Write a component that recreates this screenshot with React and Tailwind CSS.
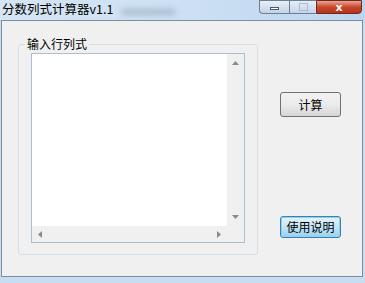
import React from "react";

const cjk = { fontFamily: '"Noto Sans CJK SC", "Noto Sans", sans-serif' };

function Arrow({ dir }) {
  const pts = {
    up: "0,4 3.5,0 7,4",
    down: "0,0 3.5,4 7,0",
    left: "4,0 0,3.5 4,7",
    right: "0,0 4,3.5 0,7",
  }[dir];
  const vert = dir === "up" || dir === "down";
  return (
    <svg width={vert ? 7 : 4} height={vert ? 4 : 7} viewBox={vert ? "0 0 7 4" : "0 0 4 7"}>
      <polygon points={pts} fill="#8a8a8a" />
    </svg>
  );
}

export default function App() {
  return (
    <div className="w-[365px] h-[283px] relative overflow-hidden bg-[#c9ddf1]" style={cjk}>
      {/* title bar */}
      <div className="h-[20px] flex items-start bg-gradient-to-r from-[#d6e5f4] via-[#cde0f3] to-[#bcd5ef]">
        <div className="pl-[2px] pt-[1px] text-[12.5px] leading-[16px] text-black">分数列式计算器v1.1</div>
        <div className="ml-[8px] mt-[9px] w-[55px] h-[6px] rounded-full bg-[#7f95ad] blur-[3px] opacity-50" />
        <div className="ml-auto mr-[3px] flex h-[14px]">
          <div className="w-[30px] h-[14px] border border-[#6d7f95] border-r-0 rounded-bl-[4px] bg-gradient-to-b from-[#e8f0f9] to-[#c2d3e6] flex items-center justify-center">
            <div className="w-[9px] h-[3px] bg-white border border-[#4a5a6e] mt-[3px]" />
          </div>
          <div className="w-[27px] h-[14px] border border-[#6d7f95] border-r-0 bg-gradient-to-b from-[#e6eef8] to-[#c5d5e7] flex items-center justify-center">
            <div className="w-[9px] h-[8px] border border-[#9aa8b8] opacity-70" />
          </div>
          <div className="w-[46px] h-[14px] border border-[#6b2a20] rounded-br-[4px] bg-gradient-to-b from-[#e8a493] via-[#c9462c] to-[#b8321a] flex items-center justify-center">
            <span className="text-white text-[11px] leading-[11px] font-bold" style={{ fontFamily: '"DejaVu Sans", sans-serif' }}>x</span>
          </div>
        </div>
      </div>
      {/* client */}
      <div className="absolute left-[1px] top-[20px] w-[362px] h-[257px] border border-[#7b8ea4] bg-[#f0f0f0]">
        <div className="absolute inset-0 flex">
          {/* group box column */}
          <div className="pl-[16px] pt-[23px]">
            <div className="relative w-[240px] h-[211px] border border-[#d5dfe5] rounded-[3px]">
              <div className="absolute left-[6px] top-[-9px] px-[2px] bg-[#f0f0f0] text-[12px] leading-[16px] text-black">输入行列式</div>
              <div className="ml-[12px] mt-[8px] w-[214px] h-[190px] border border-[#abbfd0] bg-white flex flex-col">
                <div className="flex flex-1">
                  <div className="flex-1" />
                  <div className="w-[17px] bg-[#f0f0f0] flex flex-col items-center justify-between py-[7px]">
                    <Arrow dir="up" />
                    <Arrow dir="down" />
                  </div>
                </div>
                <div className="flex h-[16px]">
                  <div className="flex-1 bg-[#f0f0f0] flex items-center justify-between px-[6px]">
                    <Arrow dir="left" />
                    <Arrow dir="right" />
                  </div>
                  <div className="w-[17px] bg-[#f0f0f0]" />
                </div>
              </div>
            </div>
          </div>
          {/* buttons column */}
          <div className="ml-[22px] flex flex-col">
            <div className="mt-[71px] w-[61px] h-[25px] border border-[#707070] rounded-[3px] bg-gradient-to-b from-[#f2f2f2] via-[#ebebeb] to-[#d6d6d6] flex items-center justify-center text-[12px] text-black">计算</div>
            <div className="mt-[99px] w-[61px] h-[22px] border border-[#3c7fb1] rounded-[3px] bg-gradient-to-b from-[#e5f4fc] via-[#c4e5f6] to-[#98d1ef] shadow-[0_0_0_1px_#8fd1f2_inset] flex items-center justify-center text-[12px] text-black">使用说明</div>
          </div>
        </div>
      </div>
    </div>
  );
}
